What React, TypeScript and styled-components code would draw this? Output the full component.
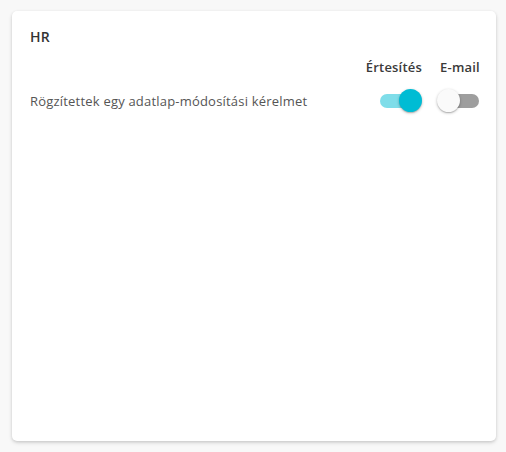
import styled, { createGlobalStyle } from 'styled-components';
import { useState } from 'react';

const GlobalStyle = createGlobalStyle`
  body {
    margin: 0;
    background-color: #f8f8f8;
    font-family: "Open Sans", "Noto Sans", sans-serif;
  }
`;

const Page = styled.div`
  padding: 11px 10px 11px 12px;
`;

const Card = styled.div`
  background-color: white;
  border-radius: 5px;
  height: 430px;
  box-sizing: border-box;
  padding: 18px 13px 16px 18px;
  box-shadow: 0 1px 3px rgba(0, 0, 0, 0.12), 0 2px 4px rgba(0, 0, 0, 0.1);
`;

const Title = styled.h2`
  margin: 0;
  font-size: 14px;
  font-weight: 600;
  color: #333;
  line-height: 16px;
  letter-spacing: 0.3px;
`;

const Grid = styled.div`
  display: grid;
  grid-template-columns: 1fr auto auto;
  column-gap: 15px;
  align-items: center;
  margin-top: 13px;
`;

const Head = styled.div<{ $align?: string }>`
  font-size: 13px;
  font-weight: 600;
  color: #3a3a3a;
  text-align: ${(p) => p.$align || 'right'};
  line-height: 18px;
  letter-spacing: 0.2px;
`;

const Label = styled.div`
  font-size: 13px;
  color: #555;
  margin-top: 13px;
  letter-spacing: 0.2px;
`;

const Cell = styled.div`
  display: flex;
  justify-content: flex-end;
  margin-top: 13px;
`;

const Switch = styled.button<{ $on: boolean }>`
  position: relative;
  width: 46px;
  height: 24px;
  padding: 0;
  border: none;
  background: none;
  cursor: pointer;

  &::before {
    content: '';
    position: absolute;
    left: 4px;
    right: 4px;
    top: 5px;
    height: 14px;
    border-radius: 7px;
    background-color: ${(p) => (p.$on ? '#7fdde9' : '#9e9e9e')};
  }

  &::after {
    content: '';
    position: absolute;
    top: 0;
    left: ${(p) => (p.$on ? '23px' : '0')};
    width: 23px;
    height: 23px;
    border-radius: 50%;
    background-color: ${(p) => (p.$on ? '#00bcd4' : '#fafafa')};
    box-shadow: 0 1px 3px rgba(0, 0, 0, 0.25), 0 1px 1px rgba(0, 0, 0, 0.14);
  }
`;

export default function App() {
  const [notify, setNotify] = useState(true);
  const [email, setEmail] = useState(false);

  return (
    <Page>
      <GlobalStyle />
      <Card>
        <Title>HR</Title>
        <Grid>
          <div></div>
          <Head>Értesítés</Head>
          <Head $align="center">E-mail</Head>
          <Label>Rögzítettek egy adatlap-módosítási kérelmet</Label>
          <Cell>
            <Switch $on={notify} onClick={() => setNotify(!notify)} />
          </Cell>
          <Cell>
            <Switch $on={email} onClick={() => setEmail(!email)} />
          </Cell>
        </Grid>
      </Card>
    </Page>
  );
}
